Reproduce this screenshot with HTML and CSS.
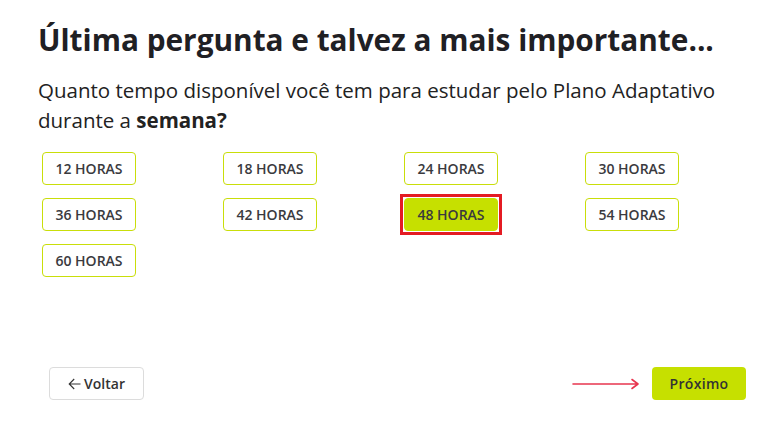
FILE: index.html
```html
<!DOCTYPE html>
<html>
<head>
<meta charset="utf-8">
<title>Última pergunta</title>
<link rel="stylesheet" href="styles.css">
</head>
<body>
<div class="quiz">
  <h1 class="quiz-title">Última pergunta e talvez a mais importante...</h1>
  <p class="quiz-question">Quanto tempo disponível você tem para estudar pelo Plano Adaptativo durante a <strong>semana?</strong></p>

  <div class="options">
    <button class="option">12 HORAS</button>
    <button class="option">18 HORAS</button>
    <button class="option">24 HORAS</button>
    <button class="option">30 HORAS</button>
    <button class="option">36 HORAS</button>
    <button class="option">42 HORAS</button>
    <button class="option selected">48 HORAS</button>
    <button class="option">54 HORAS</button>
    <button class="option">60 HORAS</button>
  </div>

  <div class="actions">
    <button class="btn-back">
      <svg class="back-arrow" width="13" height="12" viewBox="0 0 13 12">
        <path d="M12.5 6 H1.2 M6.2 1 L1.2 6 L6.2 11" fill="none" stroke="#333" stroke-width="1.1"/>
      </svg>Voltar
    </button>
    <div class="next-wrap">
      <svg class="hint-arrow" width="69" height="12" viewBox="0 0 69 12">
        <path d="M1 6 H66 M60 1.5 L66 6 L60 10.5" fill="none" stroke="#e8364f" stroke-width="1.6" stroke-linecap="round" stroke-linejoin="round"/>
      </svg>
      <button class="btn-next">Próximo</button>
    </div>
  </div>
</div>
</body>
</html>
```

FILE: styles.css
```css
body {
  margin: 0;
  background: #fff;
  font-family: "Open Sans", "Liberation Sans", sans-serif;
  color: #222;
}

.quiz {
  padding: 19px 38px 0 38px;
  height: 424px;
  box-sizing: border-box;
  display: flex;
  flex-direction: column;
}

.quiz-title {
  margin: 0;
  font-size: 29.8px;
  line-height: 42px;
  font-weight: 700;
  color: #1f2024;
}

.quiz-question {
  margin: 14px 0 0;
  font-size: 20.5px;
  line-height: 30px;
  font-weight: 500;
  color: #222;
}

.quiz-question strong {
  font-weight: 700;
}

.options {
  display: grid;
  grid-template-columns: repeat(4, 181px);
  row-gap: 13px;
  margin: 17px 0 0 4px;
}

.option {
  position: relative;
  width: 94px;
  height: 33px;
  box-sizing: border-box;
  border: 1px solid #c9de0a;
  border-radius: 4px;
  background: #fff;
  font-family: inherit;
  font-size: 14px;
  font-weight: 600;
  color: #3a3a3e;
  padding: 0;
  cursor: pointer;
}

.option.selected {
  background: #c6e000;
  border-color: #c6e000;
}

.option.selected::after {
  content: "";
  position: absolute;
  top: -5px;
  left: -5px;
  right: -5px;
  bottom: -5px;
  border: 3px solid #e41b23;
}

.actions {
  margin: auto 0 24px 11px;
  display: flex;
  justify-content: space-between;
  align-items: center;
}

.btn-back {
  width: 95px;
  height: 33px;
  box-sizing: border-box;
  border: 1px solid #dcdcdc;
  border-radius: 4px;
  background: #fff;
  font-family: inherit;
  font-size: 14px;
  font-weight: 600;
  color: #333;
  padding: 0;
  display: flex;
  align-items: center;
  justify-content: center;
}

.back-arrow {
  margin-right: 3px;
}

.next-wrap {
  display: flex;
  align-items: center;
  gap: 11px;
}

.btn-next {
  width: 94px;
  height: 33px;
  border: 0;
  border-radius: 4px;
  background: #c6e000;
  font-family: inherit;
  font-size: 14px;
  font-weight: 600;
  color: #333;
  letter-spacing: 0.3px;
  padding: 0;
}
```
